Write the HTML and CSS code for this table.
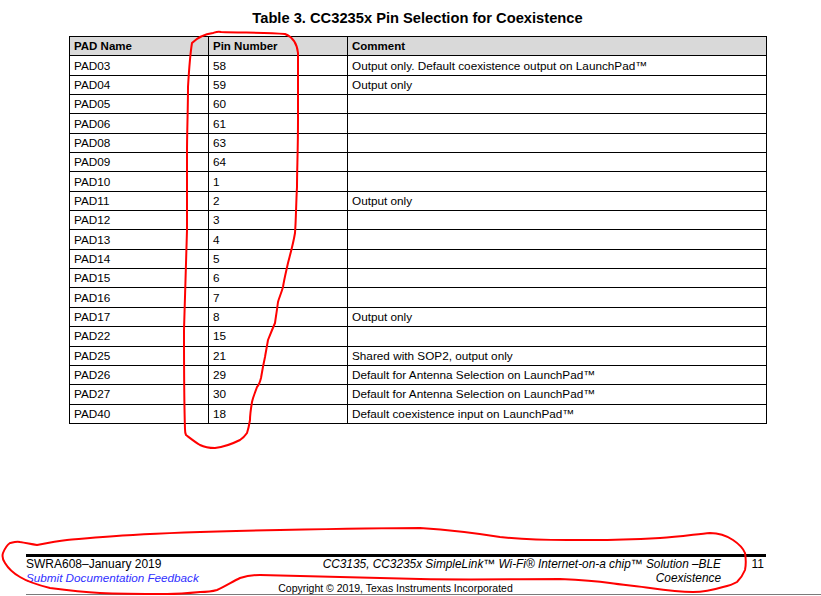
FILE: index.html
```html
<!DOCTYPE html>
<html>
<head>
<meta charset="utf-8">
<link rel="stylesheet" href="styles.css">
</head>
<body>
<div class="page">
  <h1 class="title">Table 3. CC3235x Pin Selection for Coexistence</h1>
  <table class="pins">
    <colgroup><col class="c1"><col class="c2"><col class="c3"></colgroup>
    <thead>
      <tr><th>PAD Name</th><th>Pin Number</th><th>Comment</th></tr>
    </thead>
    <tbody>
      <tr><td>PAD03</td><td>58</td><td>Output only. Default coexistence output on LaunchPad™</td></tr>
      <tr><td>PAD04</td><td>59</td><td>Output only</td></tr>
      <tr><td>PAD05</td><td>60</td><td></td></tr>
      <tr><td>PAD06</td><td>61</td><td></td></tr>
      <tr><td>PAD08</td><td>63</td><td></td></tr>
      <tr><td>PAD09</td><td>64</td><td></td></tr>
      <tr><td>PAD10</td><td>1</td><td></td></tr>
      <tr><td>PAD11</td><td>2</td><td>Output only</td></tr>
      <tr><td>PAD12</td><td>3</td><td></td></tr>
      <tr><td>PAD13</td><td>4</td><td></td></tr>
      <tr><td>PAD14</td><td>5</td><td></td></tr>
      <tr><td>PAD15</td><td>6</td><td></td></tr>
      <tr><td>PAD16</td><td>7</td><td></td></tr>
      <tr><td>PAD17</td><td>8</td><td>Output only</td></tr>
      <tr><td>PAD22</td><td>15</td><td></td></tr>
      <tr><td>PAD25</td><td>21</td><td>Shared with SOP2, output only</td></tr>
      <tr><td>PAD26</td><td>29</td><td>Default for Antenna Selection on LaunchPad™</td></tr>
      <tr><td>PAD27</td><td>30</td><td>Default for Antenna Selection on LaunchPad™</td></tr>
      <tr><td>PAD40</td><td>18</td><td>Default coexistence input on LaunchPad™</td></tr>
    </tbody>
  </table>

  <footer class="footer">
    <div class="foot-main">
      <div class="foot-left">
        <div>SWRA608–January 2019</div>
        <div class="feedback">Submit Documentation Feedback</div>
      </div>
      <div class="foot-right">CC3135, CC3235x SimpleLink™ Wi-Fi® Internet-on-a chip™ Solution –BLE<br>Coexistence</div>
      <div class="page-num">11</div>
    </div>
    <div class="copyright">Copyright © 2019, Texas Instruments Incorporated</div>
    <div class="bottom-rule"></div>
  </footer>

  <svg class="marks" width="821" height="596" viewBox="0 0 821 596">
    <path d="M192 43 C198 37 206 34 213 33 C216 32 218 31 221 32 C240 33 265 32 285 34 C293 37 297 44 298 53 C298 80 298 100 298 120 C298 150 297 170 297 187 C296 205 296 220 295 233 C293 245 290 255 288 263 C286 272 284 280 283 287 C281 294 279 298 278 302 C277 310 276 316 275 323 C272 330 270 335 268 340 C267 346 266 351 265 357 C263 366 262 372 261 378 C260 382 259 385 257 387 C255 393 253 397 252 402 C251 408 250 414 250 420 C249 426 248 430 247 433 C245 436 243 438 240 440 C232 444 224 447 215 448 C209 448 204 447 200 445 C195 442 190 438 186 435 C185 433 185 431 185 429 C184 400 184 360 184 330 C185 290 186 260 187 230 C187 200 187 175 187 153 C187 130 188 110 188 87 C189 70 190 55 192 43"/>
    <path d="M3 553 C5 548 7 545 10 543 C14 542 17 541 20 542 C26 543 31 544 37 545 C47 543 57 541 67 540 C90 538 110 536 133 535 C180 532 230 531 280 530 C330 529 380 528 420 528 C450 530 475 533 500 537 C520 539 545 540 567 540 C575 540 585 540 593 540 C615 540 640 539 660 538 C680 537 697 534 710 533 C720 533 727 536 733 540 C739 544 743 548 745 553 C746 559 746 565 745 570 C743 575 740 579 737 582 C732 585 728 586 723 587 C713 590 703 592 693 592 C678 592 664 590 650 588 C637 586 623 585 610 583 C595 581 580 580 560 579 C520 579 470 580 420 579 C380 578 320 576 260 575 C252 575 246 576 240 578 C232 582 224 587 217 590 C210 592 205 592 200 592 C190 593 180 594 167 594 C145 594 122 594 100 593 C80 592 65 590 50 588 C38 585 28 582 20 577 C13 573 8 568 5 563 C3 560 2 556 3 553"/>
  </svg>
</div>
</body>
</html>
```

FILE: styles.css
```css
* { box-sizing: border-box; }

html, body {
  margin: 0;
  padding: 0;
  background: #ffffff;
}

body {
  font-family: "Liberation Sans", Arial, sans-serif;
  color: #000;
  overflow: hidden;
}

.page {
  position: relative;
  width: 821px;
  height: 596px;
  display: flex;
  flex-direction: column;
}

.title {
  margin: 0;
  padding-top: 9px;
  font-size: 14.7px;
  line-height: 18px;
  font-weight: bold;
  text-align: center;
  padding-left: 14px;
}

.pins {
  margin: 9px 0 0 69px;
  width: 697px;
  border-collapse: collapse;
  table-layout: fixed;
  font-size: 11.75px;
}

.pins .c1 { width: 139px; }
.pins .c2 { width: 139px; }
.pins .c3 { width: 419px; }

.pins th,
.pins td {
  border: 1px solid #000;
  height: 19.35px;
  padding: 0 4px;
  text-align: left;
  vertical-align: middle;
  line-height: 14px;
  white-space: nowrap;
}

.pins th {
  background: #d9d9d9;
  font-weight: bold;
  font-size: 11.5px;
}

.footer {
  margin-top: auto;
  display: flex;
  flex-direction: column;
}

.foot-main {
  margin-left: 26px;
  width: 740px;
  border-top: 3px solid #000;
  display: flex;
  font-size: 12px;
  line-height: 14px;
}

.foot-left {
  flex: 1;
}

.feedback {
  font-style: italic;
  color: #3030ff;
  font-size: 11.7px;
}

.foot-right {
  font-style: italic;
  text-align: right;
  font-size: 11.85px;
}

.page-num {
  width: 45px;
  text-align: right;
  padding-right: 2px;
}

.copyright {
  margin-top: -2px;
  margin-left: -30px;
  text-align: center;
  font-size: 10.5px;
  line-height: 10px;
}

.bottom-rule {
  margin: 1px 0 1px 26px;
  height: 1px;
  background: #7a7a7a;
}

.marks {
  position: absolute;
  left: 0;
  top: 0;
  pointer-events: none;
}

.marks path {
  fill: none;
  stroke: #ff0000;
  stroke-width: 2;
  stroke-linecap: round;
  stroke-linejoin: round;
}
```
